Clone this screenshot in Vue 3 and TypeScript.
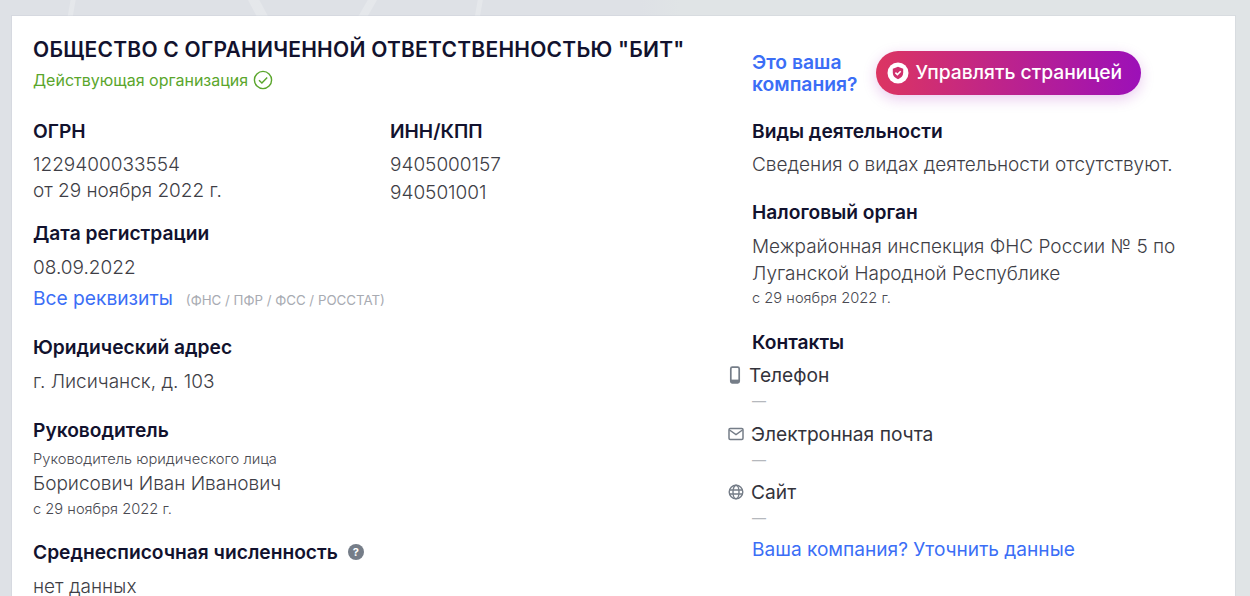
<script setup lang="ts">
interface Contact { label: string; icon: 'phone' | 'mail' | 'globe' }
const contacts: Contact[] = [
  { label: 'Телефон', icon: 'phone' },
  { label: 'Электронная почта', icon: 'mail' },
  { label: 'Сайт', icon: 'globe' },
]
</script>

<template>
  <div class="page">
    <main class="card">
      <section class="left">
        <h1 class="title">ОБЩЕСТВО С ОГРАНИЧЕННОЙ ОТВЕТСТВЕННОСТЬЮ "БИТ"</h1>
        <div class="status">
          <span>Действующая организация</span>
          <svg width="20" height="20" viewBox="0 0 20 20" fill="none" stroke="#5aa62c" stroke-width="1.4">
            <circle cx="10" cy="10" r="8.6" />
            <path d="M6 10.2l2.9 2.9L14.2 7.4" />
          </svg>
        </div>
        <div class="ids">
          <div>
            <h2 class="head">ОГРН</h2>
            <p class="val l1">1229400033554</p>
            <p class="val l2">от 29 ноября 2022 г.</p>
          </div>
          <div>
            <h2 class="head">ИНН/КПП</h2>
            <p class="val l1">9405000157</p>
            <p class="val l2b">940501001</p>
          </div>
        </div>
        <h2 class="head reg">Дата регистрации</h2>
        <p class="val l9">08.09.2022</p>
        <div class="req">
          <a class="link">Все реквизиты</a>
          <span class="agencies">(ФНС / ПФР / ФСС / РОССТАТ)</span>
        </div>
        <h2 class="head addr">Юридический адрес</h2>
        <p class="val l9">г. Лисичанск, д. 103</p>
        <h2 class="head boss">Руководитель</h2>
        <p class="small role">Руководитель юридического лица</p>
        <p class="val name">Борисович Иван Иванович</p>
        <p class="small since">с 29 ноября 2022 г.</p>
        <h2 class="head staff">
          Среднесписочная численность
          <span class="hint">?</span>
        </h2>
        <p class="val l9">нет данных</p>
      </section>

      <aside class="right">
        <div class="claim">
          <a class="claim-q">Это ваша<br />компания?</a>
          <button class="manage" type="button">
            <svg width="22" height="22" viewBox="0 0 22 22">
              <circle cx="11" cy="11" r="10.500" fill="#fff" />
              <path d="M11 4.800l5.200 1.900v4.100c0 3.100-2.100 5.200-5.200 6.400-3.100-1.200-5.200-3.300-5.200-6.400V6.700z" fill="#d0306c" />
              <path d="M8.400 10.600l2 2 3.300-3.400" fill="none" stroke="#fff" stroke-width="1.600" />
            </svg>
            <span class="manage-text">Управлять страницей</span>
          </button>
        </div>
        <h2 class="head kinds">Виды деятельности</h2>
        <p class="val l1">Сведения о видах деятельности отсутствуют.</p>
        <h2 class="head tax">Налоговый орган</h2>
        <p class="val l9">Межрайонная инспекция ФНС России № 5 по<br />Луганской Народной Республике</p>
        <p class="small tax-since">с 29 ноября 2022 г.</p>
        <h2 class="head cont">Контакты</h2>
        <div v-for="c in contacts" :key="c.label" class="contact">
          <div class="contact-row">
            <svg v-if="c.icon === 'phone'" width="14" height="18" viewBox="0 0 14 18" fill="none" stroke="#757d88" stroke-width="1.700">
              <rect x="2.800" y="1.200" width="8.400" height="15.600" rx="1.500" />
              <path d="M3 14.800h8" stroke-width="2.400" />
            </svg>
            <svg v-else-if="c.icon === 'mail'" width="16" height="18" viewBox="0 0 16 18" fill="none" stroke="#757d88" stroke-width="1.500">
              <rect x="1" y="3.500" width="14" height="11" rx="1.200" />
              <path d="M1.500 5l6.500 4.600L14.500 5" />
            </svg>
            <svg v-else width="16" height="18" viewBox="0 0 16 18" fill="none" stroke="#757d88" stroke-width="1.400">
              <circle cx="8" cy="9" r="6.800" />
              <ellipse cx="8" cy="9" rx="3" ry="6.800" />
              <path d="M1.600 7h12.800M1.600 11h12.800" />
            </svg>
            <span>{{ c.label }}</span>
          </div>
          <div class="dash">—</div>
        </div>
        <a class="link refine">Ваша компания? Уточнить данные</a>
      </aside>
    </main>
  </div>
</template>

<style>
html, body { margin: 0; overflow: hidden; }
</style>

<style scoped>
.page {
  height: 596px;
  overflow: hidden;
  padding: 16px 15px 0 12px;
  box-sizing: border-box;
  font-family: Inter, "Noto Sans", sans-serif;
  background:
    linear-gradient(100deg, transparent 69px, rgba(255,255,255,.22) 70px, rgba(255,255,255,.22) 74px, transparent 75px) 0 0 / 660px 16px no-repeat,
    linear-gradient(62deg, transparent 226px, rgba(255,255,255,.22) 227px, rgba(255,255,255,.22) 236px, transparent 237px) 0 0 / 660px 16px no-repeat,
    linear-gradient(120deg, transparent 318px, rgba(255,255,255,.22) 319px, rgba(255,255,255,.22) 326px, transparent 327px) 0 0 / 660px 16px no-repeat,
    linear-gradient(100deg, transparent 470px, rgba(255,255,255,.22) 471px, rgba(255,255,255,.22) 475px, transparent 476px) 0 0 / 660px 16px no-repeat,
    linear-gradient(90deg, #dee1e6 0, #dee1e6 640px, #e0e4e6 680px);
}
.card {
  display: flex;
  background: #fff;
  height: 620px;
  padding: 22px 0 0 21px;
  box-sizing: border-box;
  box-shadow: 0 0 0 1px rgba(190, 196, 206, .25);
}
.left { width: 719px; flex: none; }
.right { flex: 1; min-width: 0; }
h1, h2, p { margin: 0; }
.title { font-size: 21px; letter-spacing: .25px; line-height: 24px; font-weight: 600; color: #12122e; white-space: nowrap; }
.head { font-size: 19.200px; line-height: 22px; font-weight: 600; color: #12122e; }
.val { font-size: 19px; line-height: 27px; font-weight: 300; color: #3e3e46; }
.small { font-size: 14.700px; line-height: 18px; font-weight: 300; color: #4a4a52; }
.status { display: flex; align-items: center; gap: 5px; margin-top: 8px; font-size: 16px; line-height: 20px; color: #5aa62c; }
.ids { display: grid; grid-template-columns: 357px 1fr; margin-top: 30px; }
.l1 { margin-top: 9px; }
.l9 { margin-top: 10px; }
.l2 { margin-top: -1px; }
.l2b { margin-top: 1px; }
.reg { margin-top: 16px; }
.req { display: flex; align-items: baseline; gap: 13px; margin-top: 4px; }
.link { font-size: 19.200px; line-height: 27px; color: #3b6ef6; }
.agencies { font-size: 13.300px; color: #a8abb2; }
.addr { margin-top: 24px; }
.boss { margin-top: 24px; }
.role { margin-top: 9px; }
.name { margin-top: 2px; }
.since { margin-top: 3px; }
.staff { margin-top: 23px; display: flex; align-items: center; gap: 10px; }
.hint {
  width: 16px; height: 16px; border-radius: 50%;
  background: #757d88; color: #fff;
  font-size: 11px; line-height: 16px; font-weight: 700; text-align: center;
}
.claim { display: flex; align-items: flex-start; gap: 19px; margin-top: 13px; }
.claim-q { font-size: 19.300px; line-height: 22px; font-weight: 600; color: #3b6ef6; white-space: nowrap; }
.manage {
  display: flex; align-items: center; gap: 6px;
  flex: none;
  height: 44px; width: 265px; padding: 0 0 0 11px;
  border: 0; border-radius: 22px;
  background: linear-gradient(90deg, #dc3562, #9c10b8);
  box-shadow: 0 4px 14px rgba(156, 16, 184, .22);
  color: #fff; font: 500 19.300px Inter, sans-serif;
  box-sizing: border-box;
}
.manage-text { padding-bottom: 2px; }
.kinds { margin-top: 25px; }
.tax { margin-top: 23px; }
.tax-since { margin-top: 2px; }
.cont { margin-top: 24px; }
.contact { margin-top: 11px; }
.contact + .contact { margin-top: 10.500px; }
.contact-row { display: flex; align-items: center; gap: 7px; margin-left: -24px; font-size: 19.200px; line-height: 22px; font-weight: 400; color: #33333b; }
.dash { font-size: 14px; line-height: 22px; color: #b5b8bd; margin-top: 4px; }
.refine { display: block; margin-top: 7px; font-size: 19.100px; }
</style>
